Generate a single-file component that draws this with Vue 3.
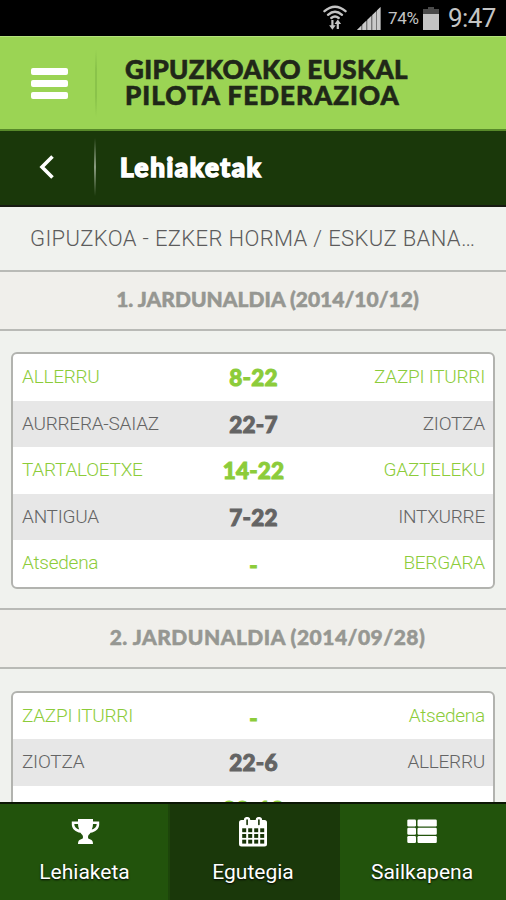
<template>
  <div class="app">
    <div class="status-bar">
      <svg class="wifi" viewBox="0 0 24 26">
        <g fill="none" stroke="#c4c4c4" stroke-width="2.400" stroke-linecap="round">
          <path d="M1.500 6.200Q12 -2.800 22.500 6.200" />
          <path d="M5 9.800Q12 3.600 19 9.800" />
          <path d="M8.300 13Q12 9.800 15.700 13" />
        </g>
        <path fill="#c4c4c4" d="M8.300 15h2.200v5.200h2.200l-3.300 4.600-3.300-4.600h2.200zM13.700 24h2.200v-5h2.200l-3.300-4.600-3.300 4.600h2.200z" />
      </svg>
      <svg class="signal" viewBox="0 0 24 23">
        <path fill="#777" d="M0 23L23.500 0v23z" />
        <path fill="#c9c9c9" d="M0 23l4-4v4zM5.400 23v-5.400L9 14v9zM10.400 23V12.800L14 9.200V23zM15.400 23V8L19 4.400V23zM20 23V3.500L23.500 0v23z" />
      </svg>
      <span class="percent">74%</span>
      <svg class="battery" viewBox="0 0 16 23">
        <path fill="#4a4a4a" d="M5 0h6v2h5v6H0V2h5z" />
        <path fill="#c4c4c4" d="M0 7h16v16H0z" />
      </svg>
      <span class="clock">9:47</span>
    </div>

    <header class="brand-bar">
      <button class="menu-btn">
        <span></span>
        <span></span>
        <span></span>
      </button>
      <div class="separator dark"></div>
      <h1 class="brand">
        <span class="brand-top">GIPUZKOAKO EUSKAL</span>
        <span class="brand-bottom">PILOTA FEDERAZIOA</span>
      </h1>
    </header>

    <div class="title-bar">
      <button class="back-btn">
        <svg viewBox="0 0 16 24">
          <path d="M13.500 1.500L3 12l10.500 10.500" fill="none" stroke="#fff" stroke-width="3.600" />
        </svg>
      </button>
      <div class="separator light"></div>
      <h2 class="title">Lehiaketak</h2>
    </div>

    <main class="content">
      <div class="competition">GIPUZKOA - EZKER HORMA / ESKUZ BANAKA</div>
      <section v-for="round in rounds" :key="round.name" class="round">
        <h3 class="round-name">{{ round.name }}</h3>
        <div class="matches">
          <div v-for="match in round.matches" :key="match.home" class="match">
            <span class="home">{{ match.home }}</span>
            <span class="score" :class="{ empty: match.score === '-' }">{{ match.score }}</span>
            <span class="away">{{ match.away }}</span>
          </div>
        </div>
      </section>
    </main>

    <nav class="tabs">
      <button
        v-for="tab in tabs"
        :key="tab.id"
        class="tab"
        :class="{ active: tab.id === activeTab }"
        @click="activeTab = tab.id"
      >
        <svg v-if="tab.id === 'lehiaketa'" class="tab-icon" viewBox="0 0 30 30">
          <path fill="#fff" fill-rule="evenodd" d="M8 2h15v2.500h6.200v3c0 4.500-3.900 7.500-8.700 8.300-1.200 1.700-2.500 2.500-2.500 4.200 0 1.500.7 2 2.500 2.500 1.400.4 2.500 1.500 2.500 4.500H8c0-3 1.100-4.100 2.500-4.500 1.800-.5 2.500-1 2.500-2.500 0-1.700-1.300-2.500-2.500-4.200-4.800-.8-8.700-3.800-8.700-8.300v-3H8zM4.300 7c0 2.900 2 4.600 4.900 5.500C8.400 10.800 8 9 8 7zM26.700 7H23c0 2-.4 3.800-1.200 5.500 2.900-.9 4.900-2.600 4.900-5.500z" />
        </svg>
        <svg v-else-if="tab.id === 'egutegia'" class="tab-icon" viewBox="0 0 30 30">
          <rect x="1" y="3" width="28" height="26.500" rx="2.500" fill="#fff" />
          <path fill="#fff" d="M5.800 3.200a3.300 3.300 0 0 1 6.600 0M17.600 3.200a3.300 3.300 0 0 1 6.600 0" />
          <path stroke="#173307" stroke-width="1.600" stroke-linecap="round" d="M9.100 3v4.500M20.900 3v4.500" />
          <g fill="#173307">
            <template v-for="row in 3" :key="row">
              <rect
                v-for="col in 4"
                :key="col"
                :x="-1.800 + col * 6"
                :y="5.600 + row * 5.700"
                width="4"
                height="3.900"
              />
            </template>
          </g>
        </svg>
        <svg v-else class="tab-icon" viewBox="0 0 30 30">
          <g fill="#fff">
            <template v-for="row in 3" :key="row">
              <rect x="0.300" :y="row * 8.300 - 5.800" width="8.700" height="6.900" rx="1.200" />
              <rect x="10.500" :y="row * 8.300 - 5.800" width="19.300" height="6.900" rx="1.200" />
            </template>
          </g>
        </svg>
        <span class="tab-label">{{ tab.label }}</span>
      </button>
    </nav>
  </div>
</template>

<script setup>
import { ref } from 'vue'

const activeTab = ref('egutegia')

const tabs = [
  { id: 'lehiaketa', label: 'Lehiaketa' },
  { id: 'egutegia', label: 'Egutegia' },
  { id: 'sailkapena', label: 'Sailkapena' }
]

const rounds = [
  {
    name: '1. JARDUNALDIA (2014/10/12)',
    matches: [
      { home: 'ALLERRU', score: '8-22', away: 'ZAZPI ITURRI' },
      { home: 'AURRERA-SAIAZ', score: '22-7', away: 'ZIOTZA' },
      { home: 'TARTALOETXE', score: '14-22', away: 'GAZTELEKU' },
      { home: 'ANTIGUA', score: '7-22', away: 'INTXURRE' },
      { home: 'Atsedena', score: '-', away: 'BERGARA' }
    ]
  },
  {
    name: '2. JARDUNALDIA (2014/09/28)',
    matches: [
      { home: 'ZAZPI ITURRI', score: '-', away: 'Atsedena' },
      { home: 'ZIOTZA', score: '22-6', away: 'ALLERRU' },
      { home: 'GAZTELEKU', score: '22-18', away: 'AURRERA-SAIAZ' }
    ]
  }
]
</script>

<style>
body {
  background: #f0f2ee;
}
</style>

<style scoped>
* {
  box-sizing: border-box;
}

.app {
  display: flex;
  flex-direction: column;
  width: 506px;
  height: 900px;
  overflow: hidden;
  background: #f0f2ee;
  font-family: Roboto, "Liberation Sans", sans-serif;
}

button {
  border: 0;
  padding: 0;
  background: none;
  font-family: inherit;
  cursor: pointer;
}

h1, h2, h3 {
  margin: 0;
  font-family: Lato, "Liberation Sans", sans-serif;
  font-weight: 900;
}

.status-bar {
  display: flex;
  flex: none;
  align-items: center;
  justify-content: flex-end;
  height: 36px;
  padding-right: 9px;
  background: #000;
  color: #c4c4c4;
}

.wifi {
  width: 24px;
  height: 26px;
  margin-right: 10px;
}

.signal {
  width: 24px;
  height: 23px;
  margin-right: 7px;
}

.percent {
  width: 32px;
  margin-right: 3px;
  font-size: 17px;
  letter-spacing: -0.300px;
  white-space: nowrap;
}

.battery {
  width: 16px;
  height: 23px;
  margin-right: 9px;
}

.clock {
  width: 49px;
  font-size: 26px;
  letter-spacing: -0.600px;
}

.brand-bar {
  display: flex;
  flex: none;
  align-items: center;
  height: 95px;
  background: #9bd454;
  border-top: 1px solid #b4e37c;
  border-bottom: 2px solid #588a2a;
}

.menu-btn {
  display: flex;
  flex-direction: column;
  gap: 5px;
  width: 37px;
  margin-left: 31px;
}

.menu-btn span {
  height: 7px;
  border-radius: 2px;
  background: #fff;
}

.separator {
  width: 2px;
}

.separator.dark {
  height: 68px;
  margin: 0 28px 0 27px;
  background: linear-gradient(#9bd454, #8ac34a 30%, #8ac34a 70%, #9bd454);
}

.separator.light {
  height: 58px;
  margin: 0 24px 0 39px;
  background: linear-gradient(#1a380a, #8a9c81 50%, #1a380a);
}

.brand {
  display: flex;
  flex-direction: column;
  padding-bottom: 3px;
  color: #202718;
  font-size: 26px;
  line-height: 26px;
  white-space: nowrap;
  -webkit-text-stroke: 0.600px #202718;
}

.brand-top {
  letter-spacing: 0.350px;
}

.brand-bottom {
  letter-spacing: 1.050px;
}

.title-bar {
  display: flex;
  flex: none;
  align-items: center;
  height: 76px;
  padding-bottom: 2px;
  background: #1a380a;
  border-bottom: 2px solid #171b12;
}

.back-btn {
  display: flex;
  margin-left: 39px;
}

.back-btn svg {
  width: 16px;
  height: 24px;
}

.title {
  color: #fff;
  font-size: 26px;
  letter-spacing: 1.600px;
  line-height: 32px;
  text-shadow: 0 1px 2px #000;
  -webkit-text-stroke: 1.600px #fff;
}

.content {
  flex: 1;
  min-height: 0;
  overflow: hidden;
}

.competition {
  height: 62.500px;
  padding: 0 26px 0 30px;
  overflow: hidden;
  color: #5c5c5c;
  font-size: 22px;
  font-weight: 300;
  letter-spacing: 0.350px;
  line-height: 64px;
  text-overflow: ellipsis;
  white-space: nowrap;
}

.round-name {
  height: 61px;
  padding-left: 29px;
  border-top: 2px solid #b9bab6;
  border-bottom: 2px solid #b9bab6;
  background: #f0efeb;
  color: #969792;
  font-size: 21px;
  line-height: 54px;
  text-align: center;
  -webkit-text-stroke: 0.500px #969792;
}

.round:last-child .round-name {
  letter-spacing: 0.480px;
}

.matches {
  margin: 21.800px 11px 19.400px;
  overflow: hidden;
  border: 2px solid #b2b3af;
  border-radius: 6px;
  background: #fff;
}

.match {
  display: grid;
  grid-template-columns: 1fr 90px 1fr;
  height: 46.500px;
  padding: 0 8px 0 9px;
  color: #8ccc3a;
  font-size: 19px;
  font-weight: 300;
  letter-spacing: -0.250px;
  line-height: 45px;
  white-space: nowrap;
}

.match:nth-child(even) {
  background: #e7e7e7;
  color: #646464;
}

.score {
  font-family: Lato, "Liberation Sans", sans-serif;
  font-size: 22.500px;
  font-weight: 900;
  letter-spacing: 0.200px;
  line-height: 47px;
  text-align: center;
  -webkit-text-stroke: 1px currentColor;
}

.score.empty {
  line-height: 51px;
}

.away {
  text-align: right;
}

.tabs {
  display: grid;
  flex: none;
  grid-template-columns: 168px 172px 166px;
  height: 98px;
  border-top: 2px solid #0c1605;
  background: #22530c;
}

.tab {
  display: flex;
  flex-direction: column;
  align-items: center;
  padding-top: 13px;
  color: #fff;
}

.tab:first-child {
  padding-left: 1px;
}

.tab.active {
  padding-right: 2px;
  background: #1a380a;
  box-shadow: inset 2px 0 #1d450b;
}

.tab:last-child {
  padding-right: 2px;
}

.tab-icon {
  width: 30px;
  height: 30px;
}

.tab-label {
  margin-top: 11px;
  font-size: 21px;
  line-height: 28px;
  text-shadow: 0 1px 2px #000;
}
</style>
